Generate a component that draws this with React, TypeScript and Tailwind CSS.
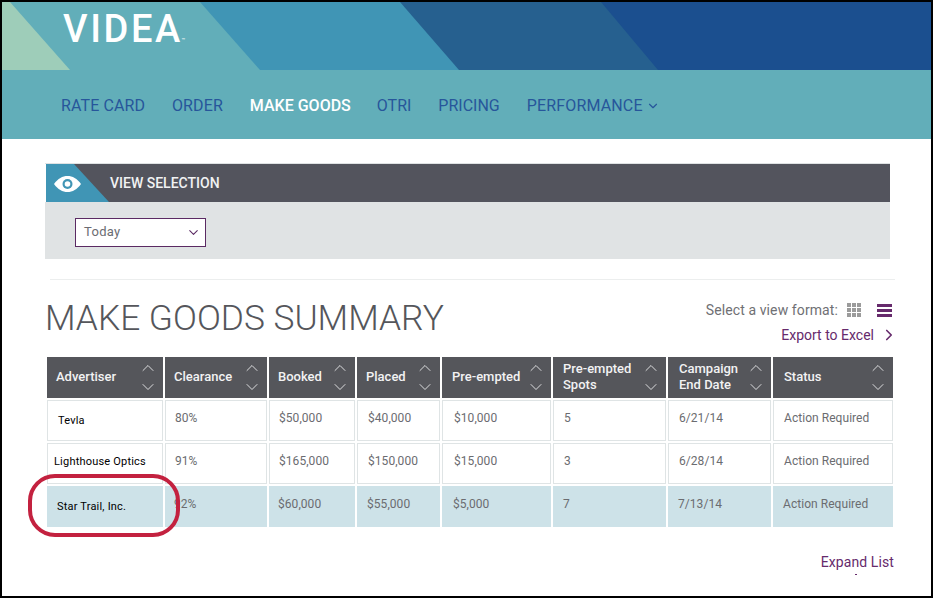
import { ChevronDown, ChevronRight, ChevronUp } from 'lucide-react';

const columns = [
  { label: 'Advertiser', head: 'pl-[9px]' },
  { label: 'Clearance', head: 'pl-[9px]' },
  { label: 'Booked', head: 'pl-[9px]' },
  { label: 'Placed', head: 'pl-[9px]' },
  { label: 'Pre-empted', head: 'pl-[10px]' },
  { label: 'Pre-empted Spots', head: 'pl-[10px]' },
  { label: 'Campaign End Date', head: 'pl-[11px]' },
  { label: 'Status', head: 'pl-[11px]' },
];

const rows = [
  { name: 'Tevla', namePad: 'pl-[10px] pt-[2px]', values: ['80%', '$50,000', '$40,000', '$10,000', '5', '6/21/14', 'Action Required'] },
  { name: 'Lighthouse Optics', namePad: 'pl-[6px] pb-[3px]', values: ['91%', '$165,000', '$150,000', '$15,000', '3', '6/28/14', 'Action Required'] },
  { name: 'Star Trail, Inc.', namePad: 'pl-[10px] pt-[2px]', values: ['92%', '$60,000', '$55,000', '$5,000', '7', '7/13/14', 'Action Required'], active: true },
];

const valuePad = ['pl-[9px]', 'pl-[9px]', 'pl-[10px]', 'pl-[11px]', 'pl-[10px]', 'pl-[10px]', 'pl-[10px]'];

function Banner() {
  return (
    <div className="relative h-[68px]">
      <svg viewBox="0 0 929 68" className="block w-[929px] h-[68px]">
        <rect width="929" height="68" fill="#1b4f8f" />
        <polygon points="0,0 599,0 656,68 0,68" fill="#26608f" />
        <polygon points="0,0 398,0 457,68 0,68" fill="#4095b5" />
        <polygon points="0,0 198,0 258,68 0,68" fill="#62aeb9" />
        <polygon points="0,0 8,0 68,68 0,68" fill="#9ecdb9" />
      </svg>
      {/* Logo */}
      <div className="absolute left-[61px] top-[5px] flex items-end text-white">
        <span className="text-[38px] leading-[44px] font-medium tracking-[2.600px]">VIDEA</span>
        <span className="mb-[8px] -ml-[1px] text-[6px] leading-[6px]">™</span>
      </div>
    </div>
  );
}

function EyeIcon() {
  return (
    <svg viewBox="0 0 27 16" className="w-[27px] h-[16px]">
      <path d="M0 8C4 2.5 8.500 0 13.500 0S23 2.500 27 8c-4 5.500-8.500 8-13.500 8S4 13.500 0 8Z" fill="#fff" />
      <circle cx="13.500" cy="8" r="5" fill="#4095b5" />
      <circle cx="13.500" cy="8" r="2.800" fill="#fff" />
    </svg>
  );
}

function GridIcon() {
  return (
    <svg viewBox="0 0 14 14" className="w-[14px] h-[14px]" fill="#9b9b9b">
      {[0, 5, 10].map((y) =>
        [0, 5, 10].map((x) => <rect key={`${x}-${y}`} x={x} y={y} width="4" height="4" />)
      )}
    </svg>
  );
}

function ListIcon() {
  return (
    <svg viewBox="0 0 15 13" className="w-[15px] h-[13px]" fill="#662a6c">
      <rect y="0" width="15" height="3" />
      <rect y="5" width="15" height="3" />
      <rect y="10" width="15" height="3" />
    </svg>
  );
}

export default function App() {
  return (
    <div className="relative w-[933px] h-[598px] overflow-hidden border-2 border-black bg-white font-['Roboto',sans-serif] text-[#55565b]">
      <Banner />

      {/* Nav */}
      <nav className="h-[69px] bg-[#62aeb9] pl-[59px] pt-[2px] flex items-center gap-[27px] text-base text-[#27569b]">
        <span className="tracking-[0.1px]">RATE CARD</span>
        <span className="tracking-[0.1px]">ORDER</span>
        <span className="text-white font-medium">MAKE GOODS</span>
        <span className="-ml-[1px]">OTRI</span>
        <span>PRICING</span>
        <span className="flex items-center gap-[3px] tracking-[0.15px]">
          PERFORMANCE
          <ChevronDown className="w-[14px] h-[14px]" strokeWidth={2} />
        </span>
      </nav>

      <main className="pl-[43px] pr-[36px] pt-[24px]">
        {/* View selection */}
        <section className="w-[845px] border-t border-[#dfe2e3]">
          <div className="ml-[1px] h-[38px] bg-[#53545d] flex items-center">
            <div className="relative w-[63px] h-[38px] shrink-0">
              <svg viewBox="0 0 63 38" className="block w-[63px] h-[38px]">
                <polygon points="0,0 28,0 63,38 0,38" fill="#4095b5" />
              </svg>
              <div className="absolute left-[8px] top-[12px] flex">
                <EyeIcon />
              </div>
            </div>
            <span className="ml-[1px] text-sm font-medium text-[#f1f2f3]">VIEW SELECTION</span>
          </div>
          <div className="h-[57px] bg-[#e0e3e4] pl-[30px] pt-[16px]">
            <div className="w-[131px] h-[29px] bg-white border border-[#5b2a63] pl-[8px] pr-[4px] flex items-center justify-between text-[13px] text-[#6b6c72]">
              <span className="-mt-[2px] tracking-[0.3px]">Today</span>
              <ChevronDown className="w-[15px] h-[15px] text-[#5b2a63]" strokeWidth={1.700} />
            </div>
          </div>
        </section>

        <hr className="mt-[20px] ml-[5px] w-[845px] border-[#eceeee]" />

        {/* Summary heading */}
        <div className="flex justify-between w-[846px] mt-[15px] h-[62px]">
          <h1 className="pt-[1px] text-[35.300px] leading-[44px] font-light text-[#55565b]">MAKE GOODS SUMMARY</h1>
          <div className="flex flex-col items-end pt-[7px] gap-[9px] -mr-[1px]">
            <div className="flex items-center h-[16px] text-sm text-[#6f7074]">
              <span className="tracking-[0.1px]">Select a view format:</span>
              <span className="ml-[9px] flex"><GridIcon /></span>
              <span className="ml-[16px] flex"><ListIcon /></span>
            </div>
            <div className="flex items-center h-[16px] text-sm text-[#662a6c]">
              <span>Export to Excel</span>
              <ChevronRight className="ml-[6px] -mr-[6px] w-[18px] h-[18px]" strokeWidth={2.200} />
            </div>
          </div>
        </div>

        {/* Table */}
        <div className="grid grid-cols-[116px_102px_86px_83px_109px_113px_103px_120px] gap-[2px] ml-[2px] w-[846px]">
          {columns.map((col) => (
            <div key={col.label} className={`h-[41px] bg-[#55565b] text-[#f2f2f3] text-[13px] leading-[16px] font-medium flex items-center justify-between pr-[5px] ${col.head}`}>
              <span className="max-w-[80px] -mt-[1px]">{col.label}</span>
              <span className="flex flex-col -space-y-[1px] text-[#e8e8ea]">
                <ChevronUp className="w-[20px] h-[20px]" strokeWidth={1.100} />
                <ChevronDown className="w-[20px] h-[20px]" strokeWidth={1.100} />
              </span>
            </div>
          ))}
          {rows.map((row) => (
            <div key={row.name} className="contents">
              <div className={`h-[41px] flex items-center text-[11px] text-black tracking-[0.2px] ${row.namePad} ${row.active ? 'bg-[#cde2e8]' : 'border border-[#dfe4e5]'}`}>
                {row.name}
              </div>
              {row.values.map((v, i) => (
                <div
                  key={i}
                  className={`h-[41px] flex items-center pb-[5px] text-xs tracking-[0.05px] text-[#6b6c70] ${valuePad[i]} ${row.active ? 'bg-[#cde2e8]' : 'border border-[#dfe4e5]'}`}
                >
                  {v}
                </div>
              ))}
            </div>
          ))}
        </div>

        <div className="w-[849px] mt-[25px] text-right text-sm tracking-[0.1px] text-[#662a6c]">Expand List</div>
        <div className="ml-[810px] mt-[2px] w-[2px] h-[1px] bg-[#662a6c]" />
      </main>

      {/* Callout */}
      <div className="absolute left-[26px] top-[472px] w-[152px] h-[63px] rounded-[27px] border-4 border-[#c3213f]" />
    </div>
  );
}
